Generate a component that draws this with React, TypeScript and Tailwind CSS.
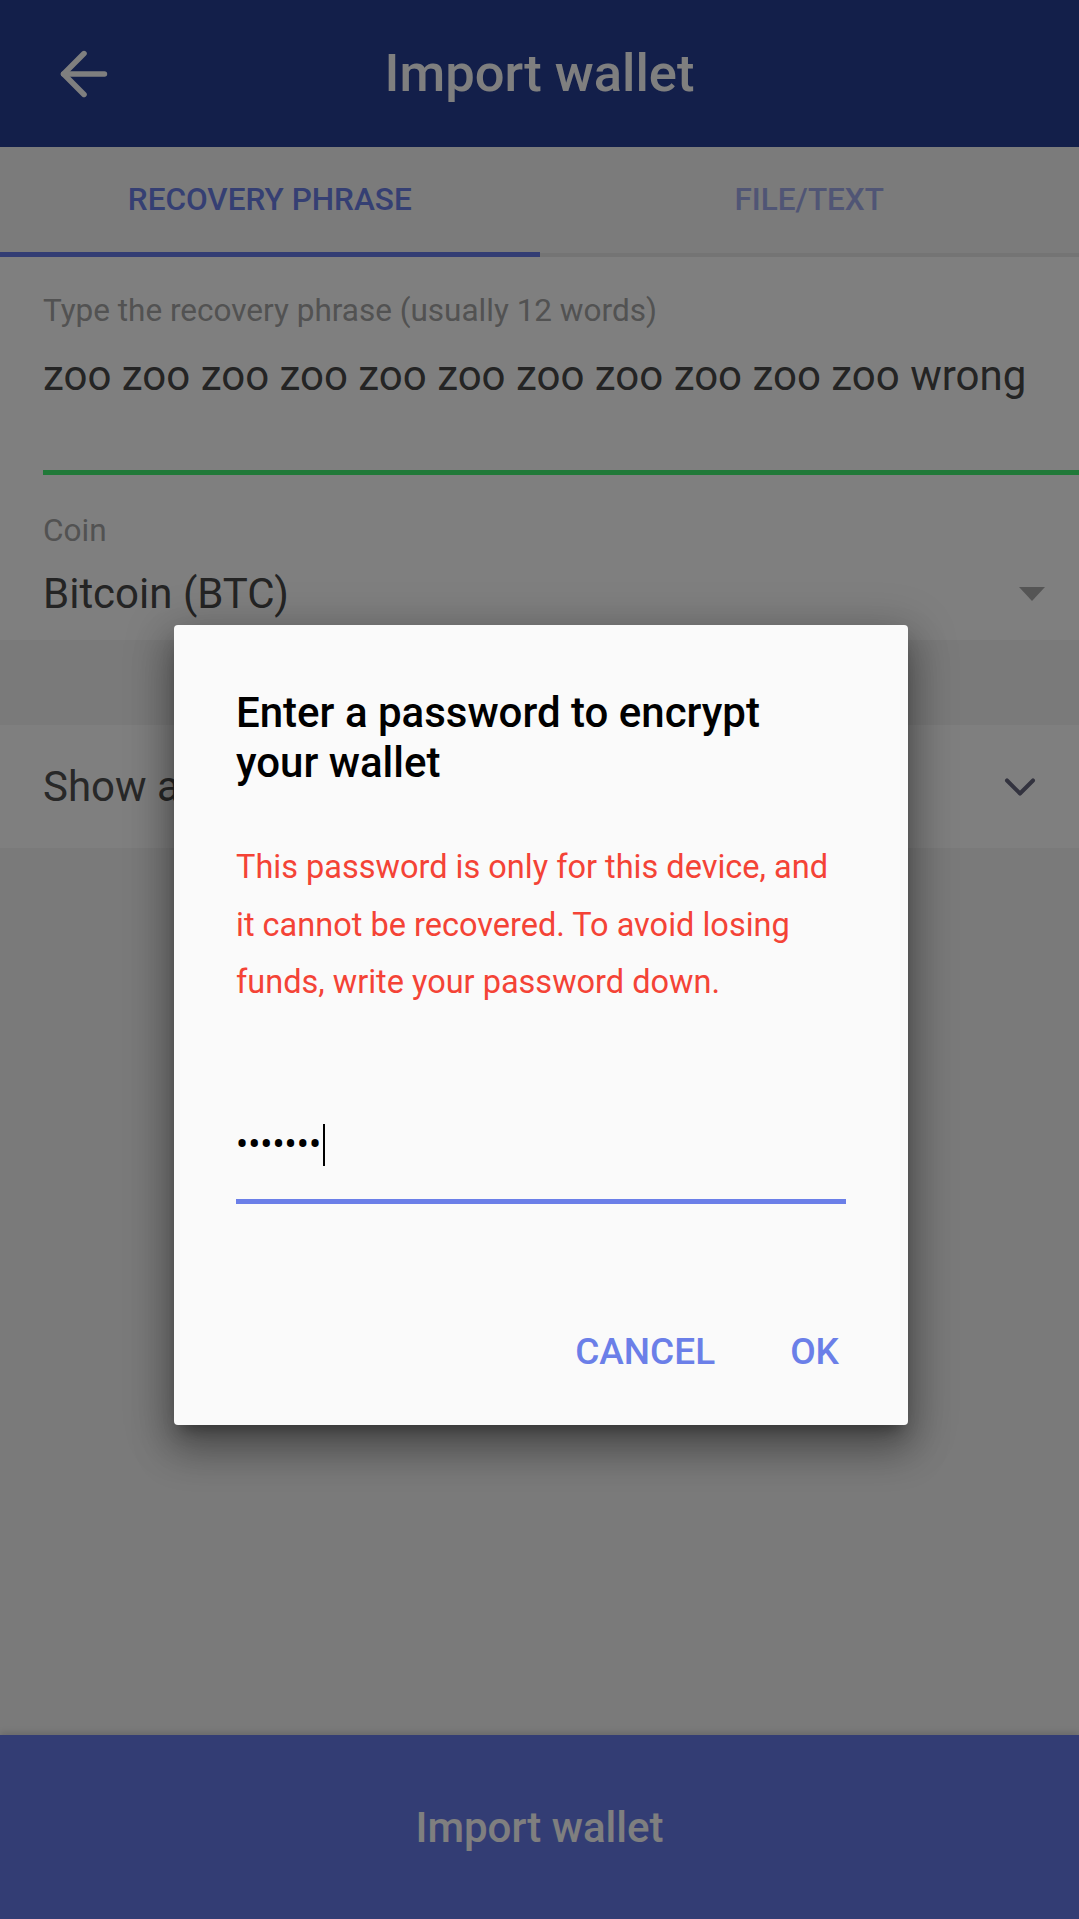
import React from 'react';

// Import wallet screen with the "encrypt your wallet" password dialog open on top

const BackArrow: React.FC = () => (
  <svg width="70" height="70" viewBox="0 0 24 24" fill="none" stroke="#ffffff" strokeWidth="1.9" strokeLinecap="round" strokeLinejoin="round">
    <path d="M19 12H5" />
    <path d="m12 19-7-7 7-7" />
  </svg>
);

const ChevronDown: React.FC = () => (
  <svg width="52" height="52" viewBox="0 0 24 24" fill="none" stroke="#66667e" strokeWidth="1.85" strokeLinecap="round" strokeLinejoin="round">
    <path d="m6 9 6 6 6-6" />
  </svg>
);

const App: React.FC = () => {
  return (
    <div className="relative flex h-[1919px] w-[1079px] flex-col overflow-hidden bg-[#f4f4f4] font-[Roboto,sans-serif]">
      {/* toolbar */}
      <header className="grid h-[147px] shrink-0 grid-cols-[147px_1fr_147px] items-center bg-[#263e94]">
        <div className="pl-[49px]">
          <BackArrow />
        </div>
        <h1 className="text-center text-[52.5px] font-medium leading-none text-white">Import wallet</h1>
        <div />
      </header>

      {/* tabs */}
      <div className="flex h-[110px] shrink-0 flex-col bg-[#f6f6f6]">
        <div className="flex flex-1">
          <div className="flex flex-1 items-center justify-center text-[31.5px] font-medium uppercase text-[#6a7ee6]">
            Recovery phrase
          </div>
          <div className="flex flex-1 items-center justify-center text-[31.5px] font-medium uppercase text-[#a0aaea]">
            File/Text
          </div>
        </div>
        <div className="flex h-[5px]">
          <div className="w-1/2 bg-[#667ae8]" />
          <div className="flex-1 border-b-[4px] border-[#e8e8e8]" />
        </div>
      </div>

      {/* phrase + coin */}
      <div className="shrink-0 bg-white pb-[21px] pl-[43px] pt-[36px]">
        <p className="text-[31.5px] leading-[36px] text-[#a4a4a4]">Type the recovery phrase (usually 12 words)</p>
        <p className="mt-[22px] text-[42px] leading-[50px] text-[#484848]">
          zoo zoo zoo zoo zoo zoo zoo zoo zoo zoo zoo wrong
        </p>
        <div className="mt-[69px] h-[5px] bg-[#42f272]" />
        <p className="mt-[38px] text-[31.5px] leading-[36px] text-[#a4a4a4]">Coin</p>
        <div className="mt-[20px] flex h-[50px] items-center justify-between pr-[34px]">
          <span className="text-[42px] leading-[50px] text-[#484848]">Bitcoin (BTC)</span>
          <svg width="26" height="14" viewBox="0 0 26 14">
            <path d="M0 0h26L13 14z" fill="#aaaaaa" />
          </svg>
        </div>
      </div>

      <div className="h-[85px] shrink-0" />

      <div className="flex h-[123px] shrink-0 items-center justify-between bg-white pl-[43px] pr-[33px]">
        <span className="text-[42px] text-[#505050]">Show advanced options</span>
        <ChevronDown />
      </div>

      <div className="flex-1" />

      <button className="h-[184px] shrink-0 bg-[#667ae8] text-[42px] font-medium text-white shadow-[0_-3px_6px_rgba(0,0,0,0.12)]">
        Import wallet
      </button>

      {/* scrim */}
      <div className="absolute inset-0 bg-black/50" />

      {/* dialog */}
      <div className="absolute left-[174px] top-[625px] flex h-[800px] w-[734px] flex-col rounded-[4px] bg-[#fafafa] px-[62px] pb-[51px] pt-[63px] shadow-[0_11px_15px_-7px_rgba(0,0,0,0.35),0_24px_38px_3px_rgba(0,0,0,0.25),0_9px_46px_8px_rgba(0,0,0,0.2)]">
        <h2 className="w-[560px] text-[42px] font-medium leading-[50px] text-black">
          Enter a password to encrypt your wallet
        </h2>
        <p className="mt-[51px] text-[32.5px] leading-[57.5px] text-[#f44336]">
          This password is only for this device, and it cannot be recovered. To avoid losing funds, write your password down.
        </p>
        <div className="mt-[91px] flex h-[84px] items-center">
          <span className="text-[36px] leading-none text-black">•••••••</span>
          <span className="ml-[2px] h-[42px] w-[2px] bg-black" />
        </div>
        <div className="mt-[12px] h-[5px] bg-[#6b7fe8]" />
        <div className="mt-auto mr-[7px] flex justify-end gap-[75px] text-[37px] font-medium uppercase leading-[44px] text-[#6b7fe8]">
          <span>Cancel</span>
          <span>OK</span>
        </div>
      </div>
    </div>
  );
};

export default App;
